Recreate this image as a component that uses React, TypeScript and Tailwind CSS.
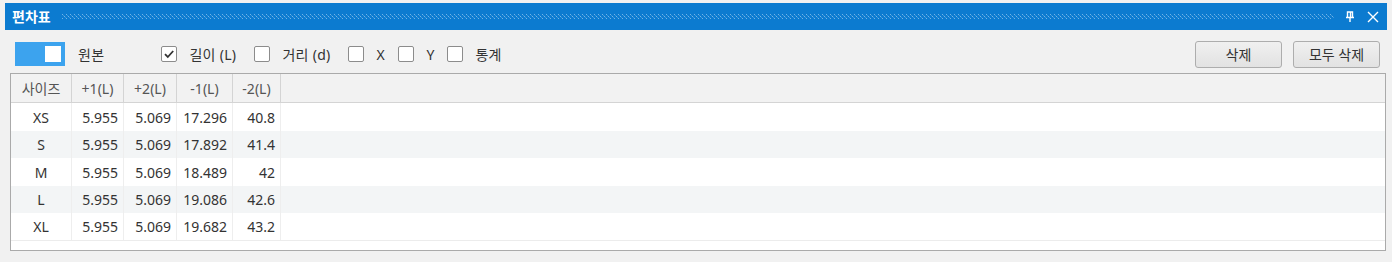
import React from "react";

const rows = [
  { size: "XS", a: "5.955", b: "5.069", c: "17.296", d: "40.8", h: "h-[28px]" },
  { size: "S", a: "5.955", b: "5.069", c: "17.892", d: "41.4", h: "h-[27px]" },
  { size: "M", a: "5.955", b: "5.069", c: "18.489", d: "42", h: "h-[28px]" },
  { size: "L", a: "5.955", b: "5.069", c: "19.086", d: "42.6", h: "h-[27px]" },
  { size: "XL", a: "5.955", b: "5.069", c: "19.682", d: "43.2", h: "h-[28px]" },
];

const Check = ({ checked, label, w }: { checked?: boolean; label: string; w: string }) => (
  <label className={`flex items-center ${w}`}>
    <span className="flex h-[16px] w-[16px] items-center justify-center rounded-[2px] border border-[#8c8c8c] bg-white">
      {checked && (
        <svg width="12" height="12" viewBox="0 0 12 12">
          <path d="M2 6.2 L4.8 9 L10.2 3" fill="none" stroke="#333" strokeWidth="1.8" />
        </svg>
      )}
    </span>
    <span className="ml-[12px] text-[14px] tracking-[0.3px] text-[#333]">{label}</span>
  </label>
);

const Btn = ({ children, w }: { children: React.ReactNode; w: string }) => (
  <button
    className={`${w} flex h-[27px] items-center justify-center rounded-[3px] border border-[#adadad] bg-gradient-to-b from-[#f0f0f0] to-[#e2e2e2] text-[14px] text-[#333]`}
  >
    {children}
  </button>
);

export default function App() {
  return (
    <div
      className="h-[262px] w-[1392px] overflow-hidden bg-[#f1f1f1] pt-[3px]"
      style={{ fontFamily: '"Noto Sans", "Noto Sans CJK KR", sans-serif' }}
    >
      {/* title bar */}
      <div className="mx-[5px] flex h-[27px] items-center bg-[#0c7bd0] pl-[7px] pr-[8px]">
        <span className="text-[14px] font-bold text-white">편차표</span>
        <svg className="ml-[11px] h-[5px] flex-1" preserveAspectRatio="none">
          <defs>
            <pattern id="dots" width="4" height="4" patternUnits="userSpaceOnUse">
              <rect x="0" y="0" width="1" height="1" fill="#6fb3e6" />
              <rect x="2" y="2" width="1" height="1" fill="#6fb3e6" />
              <rect x="1" y="1" width="1" height="1" fill="#3d95d8" />
              <rect x="3" y="3" width="1" height="1" fill="#3d95d8" />
            </pattern>
          </defs>
          <rect width="100%" height="5" fill="url(#dots)" />
        </svg>
        <svg className="ml-[11px]" width="10" height="12" viewBox="0 0 10 12">
          <path d="M2.5 1 H7.5 V6.5 H2.5 Z M5.5 1 V6.5 M1 6.5 H9 M5 6.5 V11" fill="none" stroke="white" strokeWidth="1.4" />
        </svg>
        <svg className="ml-[12px]" width="12" height="12" viewBox="0 0 12 12">
          <path d="M1 1 L11 11 M11 1 L1 11" stroke="white" strokeWidth="1.4" />
        </svg>
      </div>

      {/* toolbar */}
      <div className="flex h-[43px] items-center pl-[15px] pr-[12px] pt-[5px]">
        <div className="flex h-[24px] w-[50px] items-center justify-end bg-[#3ca3ee] pr-[4px]">
          <div className="h-[16px] w-[16px] bg-white" />
        </div>
        <span className="ml-[13px] text-[14px] tracking-[0.3px] text-[#333]">원본</span>
        <div className="ml-[57px] flex items-center">
          <Check checked label="길이 (L)" w="w-[93px]" />
          <Check label="거리 (d)" w="w-[94px]" />
          <Check label="X" w="w-[50px]" />
          <Check label="Y" w="w-[49px]" />
          <Check label="통계" w="" />
        </div>
        <div className="ml-auto flex gap-[11px]">
          <Btn w="w-[87px]">삭제</Btn>
          <Btn w="w-[87px]">모두 삭제</Btn>
        </div>
      </div>

      {/* grid */}
      <div className="ml-[10px] h-[178px] w-[1376px] border border-[#aaaaaa] bg-white text-[14px]">
        <div className="flex h-[29px] border-b border-[#d4d4d4] bg-[#f2f2f2] text-[#555]">
          <div className="flex w-[61px] items-center justify-center border-r border-[#d4d4d4]">사이즈</div>
          <div className="flex w-[52px] items-center justify-center border-r border-[#d4d4d4]">+1(L)</div>
          <div className="flex w-[53px] items-center justify-center border-r border-[#d4d4d4]">+2(L)</div>
          <div className="flex w-[56px] items-center justify-center border-r border-[#d4d4d4]">-1(L)</div>
          <div className="flex w-[48px] items-center justify-center border-r border-[#d4d4d4]">-2(L)</div>
        </div>
        {rows.map((r, i) => (
          <div
            key={r.size}
            className={`flex ${r.h} ${i % 2 === 1 ? "bg-[#f3f5f6]" : "bg-white"} ${i === rows.length - 1 ? "border-b border-[#ececec]" : ""} text-[#333]`}
          >
            <div className="flex w-[61px] items-center justify-center border-r border-[#eeeeee]">{r.size}</div>
            <div className="flex w-[52px] items-center justify-end border-r border-[#eeeeee] pr-[5px]">{r.a}</div>
            <div className="flex w-[53px] items-center justify-end border-r border-[#eeeeee] pr-[5px]">{r.b}</div>
            <div className="flex w-[56px] items-center justify-end border-r border-[#eeeeee] pr-[5px]">{r.c}</div>
            <div className="flex w-[48px] items-center justify-end border-r border-[#eeeeee] pr-[5px]">{r.d}</div>
          </div>
        ))}
      </div>
    </div>
  );
}
